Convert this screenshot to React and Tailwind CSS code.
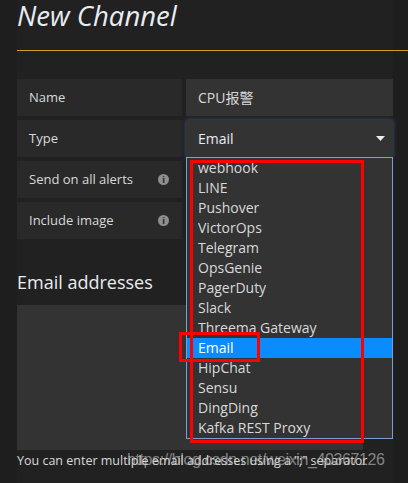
const types = [
  'webhook',
  'LINE',
  'Pushover',
  'VictorOps',
  'Telegram',
  'OpsGenie',
  'PagerDuty',
  'Slack',
  'Threema Gateway',
  'Email',
  'HipChat',
  'Sensu',
  'DingDing',
  'Kafka REST Proxy',
];

function Label({ children, info }) {
  return (
    <div className="flex h-[37px] w-[165px] items-center justify-between bg-[#292929] pl-3 pr-[13px] text-[13px] text-[#d8d9da]">
      <span>{children}</span>
      {info && (
        <span className="flex h-[11px] w-[11px] items-center justify-center rounded-full bg-[#8e8e8e] text-[9px] font-bold leading-none text-[#292929]">
          i
        </span>
      )}
    </div>
  );
}

export default function App() {
  return (
    <div
      className="relative h-[483px] w-[408px] overflow-hidden bg-[#1f1e1e] text-[#d8d9da]"
      style={{ fontFamily: '"Open Sans", "Noto Sans CJK SC", sans-serif' }}
    >
      <div className="ml-[17px] w-[376px] bg-[#212121] pb-8">
        <h1 className="pt-[1px] text-[27.5px] italic leading-[30px] text-[#e9edf2]">New Channel</h1>
        <div className="mt-[19px] h-px w-[391px] bg-[#d49a27]" />

        <div className="mt-[28px] flex flex-col gap-[4px]">
          <div className="flex gap-[4px]">
            <Label>Name</Label>
            <div className="flex h-[37px] w-[207px] items-center bg-[#333333] px-[12px] text-[14px] text-[#d8d9da]">
              CPU报警
            </div>
          </div>
          <div className="flex gap-[4px]">
            <Label>Type</Label>
            <div className="flex h-[37px] w-[207px] items-center justify-between bg-[#333333] pl-[12px] pr-[8px] text-[14px] text-[#e9edf2] shadow-[0_0_4px_rgba(80,130,200,0.55)]">
              <span>Email</span>
              <svg width="9" height="5" viewBox="0 0 9 5">
                <path d="M0 0h9L4.5 5z" fill="#e9edf2" />
              </svg>
            </div>
          </div>
          <Label info>Send on all alerts</Label>
          <Label info>Include image</Label>
        </div>

        <h3 className="mt-[31px] text-[18px] leading-[24px] text-[#e9edf2]">Email addresses</h3>
        <div className="mt-[11px] h-[145px] w-[346px] bg-[#333333]" />
        <p className="mt-[2px] text-[12.5px] leading-[18px] text-[#d8d9da]">
          You can enter multiple email addresses using a ";" separator
        </p>
      </div>

      {/* open select list */}
      <ul className="absolute left-[186px] top-[157px] w-[207px] border border-[#7b9fd4] bg-[#333333] text-[14px] leading-[20px] text-[#d8d9da]">
        {types.map((t) => (
          <li
            key={t}
            className={t === 'Email' ? 'bg-[#0a8cff] pl-[11px] text-white' : 'pl-[11px]'}
          >
            {t}
          </li>
        ))}
      </ul>

      {/* annotations */}
      <div className="pointer-events-none absolute left-[190px] top-[160px] h-[283px] w-[174px] border-[3px] border-[#ff0000]" />
      <div className="pointer-events-none absolute left-[179px] top-[332px] h-[30px] w-[81px] border-[3px] border-[#ff0000]" />

      <div
        className="pointer-events-none absolute left-[127px] top-[448px] whitespace-nowrap text-[16px] tracking-[-0.4px] text-[rgba(200,200,200,0.6)]"
        style={{ fontFamily: '"Liberation Sans", Arial, sans-serif' }}
      >
        https://blog.csdn.net/weixin_40367126
      </div>
    </div>
  );
}
